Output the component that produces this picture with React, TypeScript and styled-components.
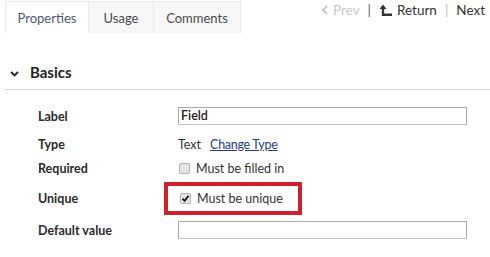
import React from 'react';
import styled, { createGlobalStyle } from 'styled-components';

const GlobalStyle = createGlobalStyle`
  html, body {
    margin: 0;
    padding: 0;
    background: #ffffff;
  }
  body {
    font-family: Lato, "Open Sans", sans-serif;
    color: #333333;
    overflow: hidden;
  }
`;

const TopBar = styled.div`
  height: 33px;
  display: flex;
  justify-content: space-between;
  align-items: flex-start;
  padding-left: 5px;
  box-sizing: border-box;
  overflow: hidden;
`;

const Tabs = styled.div`
  display: flex;
  padding-top: 1px;
`;

const Tab = styled.div<{ $active?: boolean; $width: number }>`
  width: ${({ $width }) => $width}px;
  height: 32px;
  box-sizing: border-box;
  display: flex;
  align-items: center;
  justify-content: center;
  font-size: 13px;
  color: ${({ $active }) => ($active ? '#4b5878' : '#4a4a4a')};
  background: ${({ $active }) => ($active ? '#ffffff' : '#f7f7f7')};
  border: 1px solid #e8e8e8;
  border-bottom: none;
  border-left: ${({ $active }) => ($active ? '1px solid #e8e8e8' : 'none')};
`;

const Nav = styled.div`
  display: flex;
  align-items: center;
  height: 20px;
  font-size: 13.5px;
  margin-right: -7px;
  white-space: nowrap;
`;

const NavItem = styled.span<{ $disabled?: boolean }>`
  display: inline-flex;
  align-items: center;
  gap: 4px;
  color: ${({ $disabled }) => ($disabled ? '#c8c8c8' : '#333333')};
`;

const Separator = styled.span<{ $light?: boolean }>`
  margin: 0 8px;
  color: ${({ $light }) => ($light ? '#c9c3a8' : '#555555')};
`;

const SectionHeader = styled.div`
  height: 57px;
  box-sizing: border-box;
  display: flex;
  align-items: flex-end;
  gap: 11px;
  padding: 0 0 7px 10px;
  margin-left: 5px;
  border-bottom: 1px solid #d6d6d6;
  font-size: 15px;
  font-weight: 700;
  color: #222222;
  line-height: 20px;
`;

const Chevron = styled.svg`
  margin-bottom: 5px;
  margin-left: -5px;
`;

const Form = styled.div`
  padding: 12px 0 0 38px;
`;

const Row = styled.div<{ $height: number }>`
  height: ${({ $height }) => $height}px;
  display: grid;
  grid-template-columns: 140px 1fr;
  align-items: center;
`;

const Label = styled.div`
  font-size: 12.5px;
  font-weight: 700;
  color: #2b2b2b;
`;

const Value = styled.div`
  display: flex;
  align-items: center;
  font-size: 12.5px;
  color: #333333;
`;

const TextInput = styled.div`
  width: 289px;
  height: 18px;
  box-sizing: border-box;
  border: 1px solid #a9a9a9;
  border-bottom-color: #c4c4c4;
  padding-left: 2px;
  font-size: 12.5px;
  font-weight: 600;
  color: #222222;
  line-height: 16px;
`;

const Link = styled.a`
  margin-left: 9px;
  color: #283b94;
  text-decoration: underline;
  letter-spacing: -0.3px;
`;

const Box = styled.span`
  width: 11px;
  height: 11px;
  box-sizing: border-box;
  border: 1px solid #b0b0b0;
  border-radius: 2px;
  background: #e4e4e4;
  display: inline-flex;
  align-items: center;
  justify-content: center;
  margin: 0 6px 0 1px;
`;

const Highlight = styled.div`
  margin-left: -14px;
  width: 138px;
  height: 33px;
  box-sizing: border-box;
  border: 4px solid #d0202e;
  display: flex;
  align-items: center;
  padding-left: 11px;
`;

type CheckboxProps = { checked?: boolean; label: string };

function Checkbox({ checked, label }: CheckboxProps) {
  return (
    <>
      <Box>
        {checked && (
          <svg width="9" height="9" viewBox="0 0 9 9">
            <path d="M1.5 4.6 L3.6 6.8 L7.6 1.8" fill="none" stroke="#111" strokeWidth="1.8" />
          </svg>
        )}
      </Box>
      <span>{label}</span>
    </>
  );
}

export default function App() {
  return (
    <>
      <GlobalStyle />
      <TopBar>
        <Tabs>
          <Tab $active $width={84}>Properties</Tab>
          <Tab $width={65}>Usage</Tab>
          <Tab $width={87}>Comments</Tab>
        </Tabs>
        <Nav>
          <NavItem $disabled>
            <svg width="8" height="10" viewBox="0 0 8 10">
              <path d="M6 1 L2 5 L6 9" fill="none" stroke="#c8c8c8" strokeWidth="2" />
            </svg>
            Prev
          </NavItem>
          <Separator>|</Separator>
          <NavItem>
            <svg width="14" height="13" viewBox="0 0 14 13">
              <path d="M4 0.5 L0.5 5 H2.8 V12 H13 V9.6 H5.2 V5 H7.5 Z" fill="#333" />
            </svg>
            Return
          </NavItem>
          <Separator $light>|</Separator>
          <NavItem>
            Next
            <svg width="8" height="10" viewBox="0 0 8 10">
              <path d="M2 1 L6 5 L2 9" fill="none" stroke="#333" strokeWidth="2" />
            </svg>
          </NavItem>
        </Nav>
      </TopBar>
      <SectionHeader>
        <Chevron width="9" height="6" viewBox="0 0 9 6">
          <path d="M1 1 L4.5 4.5 L8 1" fill="none" stroke="#222" strokeWidth="1.8" />
        </Chevron>
        Basics
      </SectionHeader>
      <Form>
        <Row $height={28}>
          <Label>Label</Label>
          <Value>
            <TextInput>Field</TextInput>
          </Value>
        </Row>
        <Row $height={28}>
          <Label>Type</Label>
          <Value>
            Text
            <Link>Change Type</Link>
          </Value>
        </Row>
        <Row $height={20}>
          <Label>Required</Label>
          <Value>
            <Checkbox label="Must be filled in" />
          </Value>
        </Row>
        <Row $height={40}>
          <Label>Unique</Label>
          <Value>
            <Highlight>
              <Checkbox checked label="Must be unique" />
            </Highlight>
          </Value>
        </Row>
        <Row $height={24}>
          <Label>Default value</Label>
          <Value>
            <TextInput />
          </Value>
        </Row>
      </Form>
    </>
  );
}
